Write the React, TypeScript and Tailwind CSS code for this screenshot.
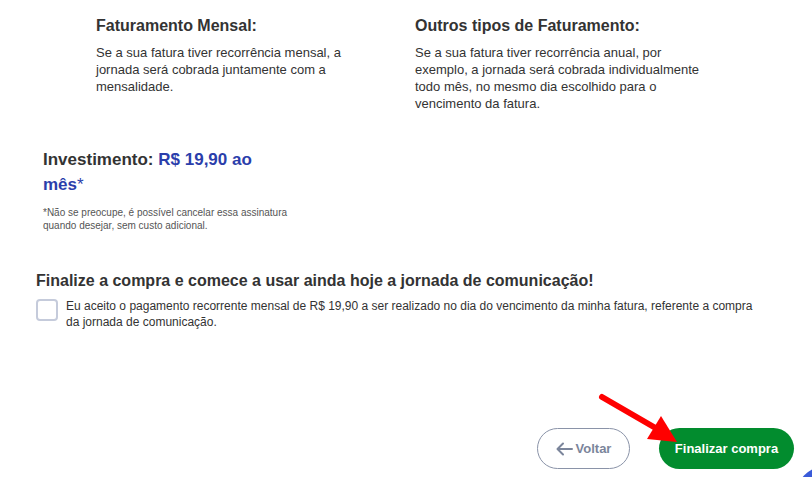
import React from "react";

const Column = ({ title, children }: { title: string; children: React.ReactNode }) => (
  <div className="w-[290px]">
    <h3 className="text-[16px] font-bold text-[#333333] leading-[20px]">{title}</h3>
    <p className="mt-[8px] text-[13px] leading-[17px] text-[#333333]">{children}</p>
  </div>
);

const App = () => {
  return (
    <div
      className="relative w-[812px] h-[477px] overflow-hidden bg-white"
      style={{ fontFamily: '"Liberation Sans", Arial, sans-serif' }}
    >
      {/* faturamento */}
      <div className="flex gap-[29px] pl-[96px] pt-[16px]">
        <Column title="Faturamento Mensal:">
          Se a sua fatura tiver recorrência mensal, a jornada será cobrada juntamente com a mensalidade.
        </Column>
        <Column title="Outros tipos de Faturamento:">
          Se a sua fatura tiver recorrência anual, por exemplo, a jornada será cobrada individualmente todo mês, no
          mesmo dia escolhido para o vencimento da fatura.
        </Column>
      </div>

      {/* investimento */}
      <div className="pl-[43px] mt-[35px] w-[290px]">
        <p className="text-[17px] font-bold leading-[25px] text-[#333333]">
          Investimento:{" "}
          <span className="text-[#2b3eab]">
            R$ 19,90 ao mês<span className="font-normal">*</span>
          </span>
        </p>
        <p className="mt-[9px] text-[10px] leading-[13px] text-[#555555]">
          *Não se preocupe, é possível cancelar essa assinatura quando desejar, sem custo adicional.
        </p>
      </div>

      {/* aceite */}
      <div className="pl-[36px] mt-[39px]">
        <h3 className="text-[16px] font-bold leading-[20px] text-[#333333]">
          Finalize a compra e comece a usar ainda hoje a jornada de comunicação!
        </h3>
        <label className="mt-[7px] flex items-start gap-[8px] pr-[50px]">
          <span className="mt-[1px] h-[22px] w-[22px] shrink-0 rounded-[4px] border-2 border-[#c5cbdb] bg-white" />
          <span className="text-[12px] leading-[16px] text-[#333333]">
            Eu aceito o pagamento recorrente mensal de R$ 19,90 a ser realizado no dia do vencimento da minha fatura,
            referente a compra da jornada de comunicação.
          </span>
        </label>
      </div>

      {/* botões */}
      <div className="absolute bottom-[8px] right-[18px] flex gap-[29px]">
        <button className="flex h-[41px] w-[93px] items-center justify-center gap-[3px] rounded-full border border-[#8a93a8] text-[13px] font-bold text-[#7b859b]">
          <svg width="17" height="14" viewBox="0 0 17 14" fill="none" stroke="#7b859b" strokeWidth="2" strokeLinecap="round" strokeLinejoin="round">
            <path d="M16 7H2M7 1.5 1.5 7 7 12.5" />
          </svg>
          Voltar
        </button>
        <button className="h-[41px] w-[135px] rounded-full bg-[#028c2e] text-[13px] font-bold text-white">
          Finalizar compra
        </button>
      </div>

      {/* seta vermelha */}
      <svg className="absolute left-[597px] top-[392px]" width="90" height="60" viewBox="0 0 90 60">
        <line x1="5" y1="5" x2="62" y2="38" stroke="#ff0000" strokeWidth="6" strokeLinecap="round" />
        <polygon points="80,50 50,47 64,24" fill="#ff0000" />
      </svg>

      {/* canto azul */}
      <div className="absolute left-[796px] top-[466px] h-[60px] w-[60px] rounded-full bg-[#3a5bd9]" />
    </div>
  );
};

export default App;
